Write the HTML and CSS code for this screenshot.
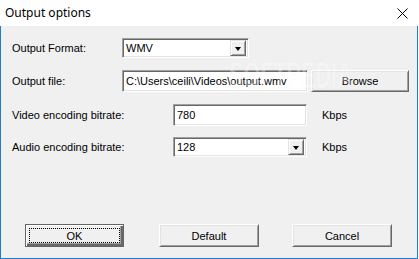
FILE: index.html
```html
<!DOCTYPE html>
<html>
<head>
<meta charset="utf-8">
<link rel="stylesheet" href="styles.css">
</head>
<body>
<div class="window">
  <div class="titlebar">
    <span class="title">Output options</span>
    <svg class="close" width="11" height="11" viewBox="0 0 11 11"><path d="M0.5 0.5 L10.5 10.5 M10.5 0.5 L0.5 10.5" stroke="#000" stroke-width="1" fill="none"/></svg>
  </div>
  <div class="client">
    <div class="row r1">
      <span class="label w110">Output Format:</span>
      <div class="combo w126">
        <span class="value">WMV</span>
        <span class="drop"><i class="tri"></i></span>
      </div>
    </div>
    <div class="row r2">
      <span class="label w110">Output file:</span>
      <div class="edit w185"><span class="value">C:\Users\ceili\Videos\output.wmv</span></div>
      <button class="btn browse">Browse</button>
    </div>
    <div class="row r3">
      <span class="label w161">Video encoding bitrate:</span>
      <div class="edit w134"><span class="value">780</span></div>
      <span class="unit">Kbps</span>
    </div>
    <div class="row r4">
      <span class="label w161">Audio encoding bitrate:</span>
      <div class="combo w134">
        <span class="value">128</span>
        <span class="drop"><i class="tri"></i></span>
      </div>
      <span class="unit">Kbps</span>
    </div>
    <div class="buttons">
      <button class="btn ok"><span class="focus">OK</span></button>
      <button class="btn def">Default</button>
      <button class="btn cancel">Cancel</button>
    </div>
    <div class="watermark">SOFTPEDIA</div>
  </div>
</div>
</body>
</html>
```
FILE: styles.css
```css
* { box-sizing: border-box; }
html, body { margin: 0; padding: 0; background: #fff; }
body { width: 419px; height: 259px; overflow: hidden; font-family: "Liberation Sans", Arial, sans-serif; font-size: 11px; color: #000; }

.window { width: 418px; }
.titlebar { height: 26px; background: #fff; display: flex; align-items: center; justify-content: space-between; padding: 0 10px 0 5px; }
.title { font-family: "Noto Sans", "Open Sans", sans-serif; font-size: 12px; color: #000; position: relative; top: -1px; }
.close { display: block; }

.client { position: relative; overflow: hidden; height: 233px; background: #f0f0f0; border-left: 1px solid #1a7fd4; border-right: 1px solid #1a7fd4; border-bottom: 1px solid #1a7fd4; padding: 12px 0 0 11px; }

.row { display: flex; align-items: center; }
.r2 { margin-top: 12px; }
.r3 { margin-top: 12px; }
.r4 { margin-top: 11px; }
.label { flex: none; }
.w110 { width: 110px; }
.w161 { width: 161px; }
.w126 { width: 127px; }
.w185 { width: 186px; }
.w134 { width: 134px; }

.edit, .combo {
  flex: none;
  background: #fff;
  border-top: 1px solid #a0a0a0; border-left: 1px solid #a0a0a0;
  border-bottom: 1px solid #fff; border-right: 1px solid #fff;
  box-shadow: inset 1px 1px 0 #696969, inset -1px -1px 0 #e3e3e3;
  display: flex; align-items: center;
  padding-left: 3px;
  white-space: nowrap; overflow: hidden;
}
.edit { height: 22px; }
.combo { height: 20px; justify-content: space-between; padding-right: 2px; }
.value { line-height: 13px; }
.drop {
  width: 16px; height: 16px; background: #f0f0f0;
  border-top: 1px solid #e3e3e3; border-left: 1px solid #e3e3e3;
  border-right: 1px solid #696969; border-bottom: 1px solid #696969;
  box-shadow: inset 1px 1px 0 #fff, inset -1px -1px 0 #a0a0a0;
  display: flex; align-items: center; justify-content: center;
}
.tri { display: block; width: 0; height: 0; border-left: 3.5px solid transparent; border-right: 3.5px solid transparent; border-top: 4px solid #000; margin-top: 1px; }

.unit { margin-left: 15px; }

.btn {
  font-family: "Liberation Sans", Arial, sans-serif; font-size: 11px; color: #000;
  background: #f0f0f0; height: 23px; padding: 0; margin: 0;
  border-top: 1px solid #fff; border-left: 1px solid #fff;
  border-right: 1px solid #696969; border-bottom: 1px solid #696969;
  box-shadow: inset 1px 1px 0 #e3e3e3, inset -1px -1px 0 #a0a0a0;
  display: flex; align-items: center; justify-content: center;
  flex: none;
}
.browse { width: 98px; height: 22px; margin-left: 3px; }

.buttons { display: flex; margin-top: 67px; }
.ok { width: 99px; margin-left: 13px; border: 1px solid #646464; box-shadow: inset 1px 1px 0 #fff, inset -2px -2px 0 #696969, inset -3px -3px 0 #a0a0a0; padding: 3px; }
.focus { display: flex; align-items: center; justify-content: center; width: 100%; height: 100%; border: 1px dotted #000; }
.def { width: 100px; margin-left: 35px; }
.cancel { width: 100px; margin-left: 33px; }

.watermark {
  position: absolute; left: 228px; top: 30px;
  font-family: "Liberation Sans", Arial, sans-serif; font-weight: bold; font-size: 36px; line-height: 40px;
  color: rgba(255,255,255,0.3); pointer-events: none;
  -webkit-text-stroke: 0.5px rgba(225,225,225,0.35);
  transform: scaleX(0.6); transform-origin: left top;
}
```
